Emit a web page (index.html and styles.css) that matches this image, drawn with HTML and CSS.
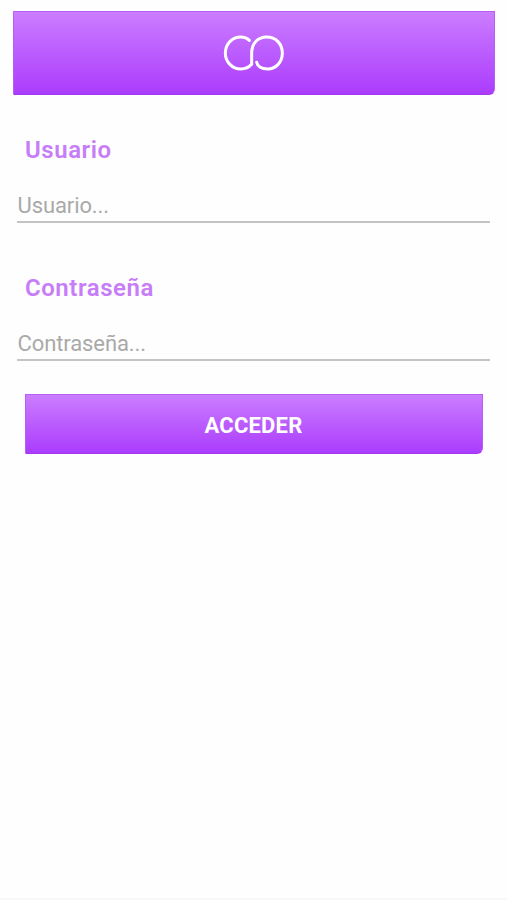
FILE: index.html
```html
<!DOCTYPE html>
<html lang="es">
<head>
<meta charset="utf-8">
<title>Acceso</title>
<link rel="stylesheet" href="styles.css">
</head>
<body>
<main class="screen">
  <header class="brand">
    <svg class="logo" viewBox="0 0 330 210" aria-hidden="true">
      <path d="M148 61C141 54 132 51 122 51C97 51 76 72 76 99C76 126 97 147 122 147C136 147 147 142 155 133V95C156 70 174 51 200 51C228 51 247 72 247 99C247 126 228 147 203 147C185 147 172 139 170 127"/>
    </svg>
  </header>
  <form class="login">
    <label class="label" for="user">Usuario</label>
    <input class="field" id="user" type="text" placeholder="Usuario...">
    <label class="label" for="pass">Contraseña</label>
    <input class="field" id="pass" type="password" placeholder="Contraseña...">
    <button class="submit" type="button">ACCEDER</button>
  </form>
  <footer class="edge"></footer>
</main>
</body>
</html>
```
FILE: styles.css
```css
* { box-sizing: border-box; }
body { margin: 0; background: #fefefe; font-family: Roboto, sans-serif; }
.screen { display: flex; flex-direction: column; height: 900px; padding-top: 11px; overflow: hidden; }
.brand, .submit {
  background: linear-gradient(#cb7dff, #ab3cfd);
  border: 1px solid #b75ff4;
  border-bottom-color: #a336ee;
  border-radius: 1px 1px 6px 1px;
}
.brand { height: 84px; margin: 0 11px 0 13px; }
.logo { display: block; width: 110px; height: 70px; margin: 8px 0 0 186px; }
.logo path { fill: none; stroke: #fff; stroke-width: 9; stroke-linecap: round; stroke-linejoin: round; }
.login { display: flex; flex-direction: column; padding: 39px 16px 0 17px; }
.label { height: 32px; margin-left: 8px; font-size: 24px; line-height: 32px; font-weight: 600; letter-spacing: 0.55px; color: #c77df8; }
.field {
  height: 40px; margin: 17px 0 49px; padding: 6px 0 0 0.5px; border: 0;
  border-bottom: 2px solid #c4c4c4; background: none;
  font: 400 22px Roboto, sans-serif; letter-spacing: -0.1px; color: #555; outline: 0;
}
.field::placeholder { color: #a9a9a9; opacity: 1; }
#pass { margin-bottom: 33px; }
.submit { height: 60px; margin: 0 7px 0 8px; padding: 2px 1px 0 0; font: 700 22px Roboto, sans-serif; letter-spacing: 0.2px; color: #fff; }
.edge { height: 2px; margin-top: auto; background: #f7f7f7; }
```
